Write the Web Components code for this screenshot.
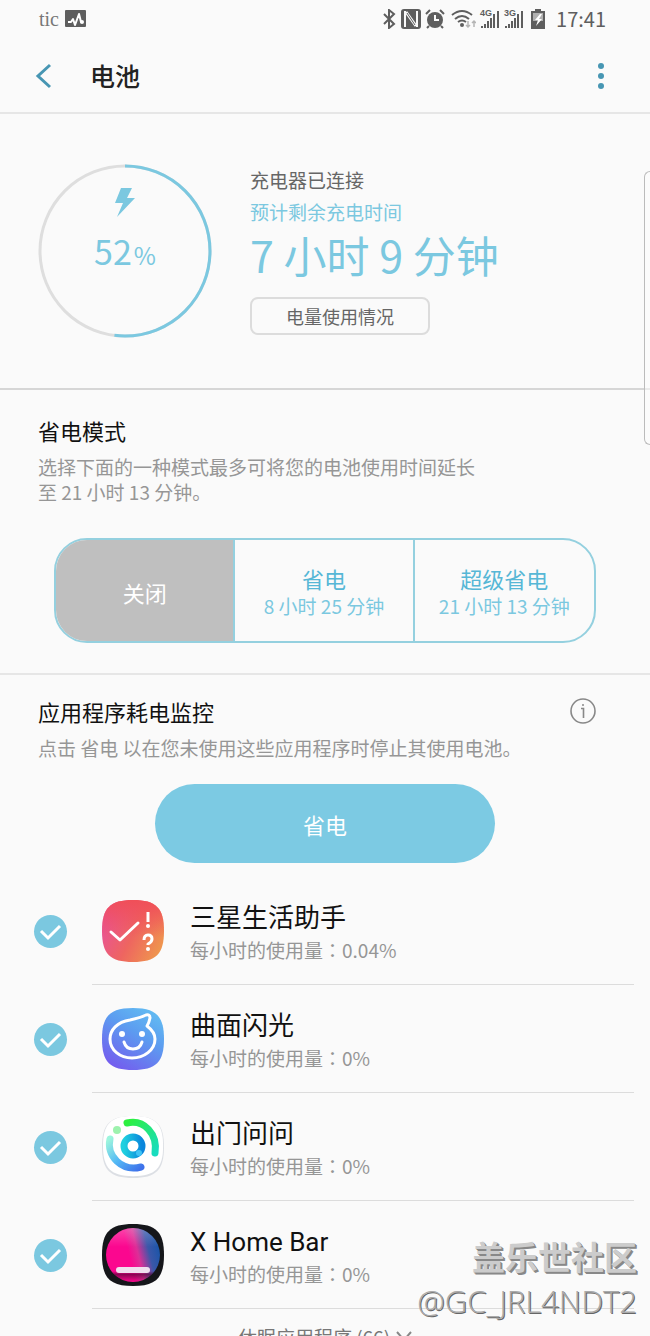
<!DOCTYPE html>
<html lang="zh-CN">
<head>
<meta charset="utf-8">
<meta name="viewport" content="width=device-width, initial-scale=1">
<title>电池</title>
<style>
  html, body {
    height: 100%;
    margin: 0;
  }
  body {
    background: #fafafa;
    color: #111;
    font-family: "Noto Sans CJK SC", "Liberation Sans", sans-serif;
    font-weight: 400;
    overflow: hidden;
    --accent: #7bc8e0;
    --accent-deep: #56b7d6;
    --muted: #969696;
    --dark: #666;
  }
</style>
</head>
<body>
<phone-screen>
  <status-bar slot="top" time="17:41"></status-bar>
  <title-bar slot="top">电池</title-bar>

  <battery-summary level="52">
    <span slot="state">充电器已连接</span>
    <span slot="hint">预计剩余充电时间</span>
    <span slot="time">7 小时 9 分钟</span>
    <span slot="action">电量使用情况</span>
  </battery-summary>

  <settings-section>
    <span slot="title">省电模式</span>
    <span slot="text">选择下面的一种模式最多可将您的电池使用时间延长至 21 小时 13 分钟。</span>
    <mode-switch>
      <mode-option selected>关闭</mode-option>
      <mode-option detail="8 小时 25 分钟">省电</mode-option>
      <mode-option detail="21 小时 13 分钟">超级省电</mode-option>
    </mode-switch>
  </settings-section>

  <settings-section info>
    <span slot="title">应用程序耗电监控</span>
    <span slot="text">点击 省电 以在您未使用这些应用程序时停止其使用电池。</span>
    <pill-button>省电</pill-button>
  </settings-section>

  <app-list></app-list>
  <sleep-more>休眠应用程序 (66)</sleep-more>

  <edge-handle slot="over"></edge-handle>
  <water-mark slot="over" user="@GC_JRL4NDT2">盖乐世社区</water-mark>
</phone-screen>

<script>
class BaseElement extends HTMLElement {

  constructor() {
    super();
    this.attachShadow({mode: 'open'});
  }

  connectedCallback() {
    this.shadowRoot.innerHTML = this.render();
  }
}

class PhoneScreen extends BaseElement {
  render() {
    return `
      <style>
        :host { display: flex; flex-direction: column; position: relative; height: 100%; overflow: hidden; }
        main { flex: 1; min-height: 0; overflow-y: auto; scrollbar-width: none; }
      </style>
      <slot name="top"></slot>
      <main><slot></slot></main>
      <slot name="over"></slot>
    `;
  }
}

class StatusBar extends BaseElement {
  // signal triangle made of bars, with the network name over it
  signal(name) {
    return `
      <span class="signal">
        <small>${name}</small>
        <svg width="20" height="20" viewBox="0 0 20 20" fill="#5e5e5e">
          <rect x="1" y="17" width="2" height="2"/><rect x="4" y="15" width="2" height="4"/>
          <rect x="7" y="12" width="2" height="7"/><rect x="10" y="9" width="2" height="10"/>
          <rect x="13" y="5" width="2" height="14"/><rect x="17" y="2" width="2" height="17"/>
        </svg>
      </span>`;
  }

  render() {
    return `
      <style>
        :host { display: flex; align-items: center; justify-content: space-between; height: 38px; padding: 0 44px 0 39px; color: #5e5e5e; }
        div { display: flex; align-items: center; gap: 4px; }
        .left { gap: 6px; }
        .left span { font: 20px/24px "Liberation Serif", serif; color: #777; }
        .time { font-size: 20px; line-height: 24px; margin-left: 4px; }
        .signal { position: relative; display: flex; }
        small { position: absolute; left: 0; top: 0; font: bold 9px/9px "Liberation Sans", sans-serif; background: #fafafa; }
        svg { display: block; }
      </style>
      <div class="left">
        <span>tic</span>
        <svg width="21" height="18" viewBox="0 0 21 18">
          <rect width="21" height="17" rx="1" fill="#5e5e5e"/>
          <path d="M3 12h3l2-3 2 6 4-11 2 8h2" fill="none" stroke="#fff" stroke-width="2" stroke-linejoin="round"/>
          <circle cx="17" cy="12" r="2" fill="#fff"/>
        </svg>
      </div>
      <div>
        <svg width="15" height="20" viewBox="0 0 15 20" fill="none" stroke="#5e5e5e" stroke-width="2">
          <path d="M2 5l10 10-5 4V1l5 4L2 15"/>
        </svg>
        <svg width="20" height="20" viewBox="0 0 20 20">
          <rect width="20" height="20" rx="3" fill="#5e5e5e"/>
          <path d="M4 18V2M16 18V2" stroke="#fafafa" stroke-width="2"/>
          <path d="M5 3l10 14" stroke="#fafafa" stroke-width="3"/>
          <path d="M6 4l8 12" stroke="#5e5e5e" stroke-width="1"/>
        </svg>
        <svg width="20" height="20" viewBox="0 0 20 20">
          <circle cx="10" cy="11" r="8" fill="#5e5e5e"/>
          <path d="M1 5l4-4M19 5l-4-4M4 17l-2 2M16 17l2 2" stroke="#5e5e5e" stroke-width="2"/>
          <path d="M10 6v5h4" fill="none" stroke="#fafafa" stroke-width="2"/>
        </svg>
        <svg width="27" height="20" viewBox="0 0 27 20">
          <g fill="none" stroke="#5e5e5e" stroke-width="2" transform="translate(2 0)">
            <path d="M1 6q10-8 20 0M4 10q7-6 14 0M7 13q4-3 8 0"/>
          </g>
          <circle cx="13" cy="16" r="2" fill="#5e5e5e"/>
          <path d="M19 12v6M17 16l2 2 2-2M25 18v-6M23 14l2-2 2 2" fill="none" stroke="#b5b5b5" stroke-width="1.5"/>
        </svg>
        ${this.signal('4G')}
        ${this.signal('3G')}
        <svg width="20" height="20" viewBox="0 0 20 20">
          <path d="M7 0h6v2h4v18H3V2h4z" fill="#5e5e5e"/>
          <rect x="5" y="4" width="10" height="8" fill="#b0b0b0"/>
          <path d="M12 5l-5 6h3l-2 6 6-7h-3l3-5z" fill="#fff"/>
        </svg>
        <span class="time">${this.getAttribute('time')}</span>
      </div>
    `;
  }
}

class TitleBar extends BaseElement {
  render() {
    return `
      <style>
        :host { display: flex; align-items: center; height: 74px; padding: 0 37px 0 31px; border-bottom: 2px solid #e6e6e6; }
        button { display: flex; justify-content: center; width: 24px; padding: 2px 0 0; border: 0; background: none; }
        h1 { flex: 1; margin: 0 0 0 35px; font-size: 25px; line-height: 36px; font-weight: 500; color: #222; }
      </style>
      <button aria-label="返回">
        <svg width="18" height="26" viewBox="0 0 18 26" fill="none" stroke="#4796b3" stroke-width="3">
          <path d="M16 2L4 13l12 11"/>
        </svg>
      </button>
      <h1><slot></slot></h1>
      <button aria-label="更多">
        <svg width="8" height="26" viewBox="0 0 8 26" fill="#4796b3">
          <circle cx="4" cy="3" r="3"/><circle cx="4" cy="13" r="3"/><circle cx="4" cy="23" r="3"/>
        </svg>
      </button>
    `;
  }
}

class BatterySummary extends BaseElement {
  render() {
    const level = this.getAttribute('level');
    // the arc starts at 12 o'clock
    return `
      <style>
        :host { display: flex; gap: 38px; padding: 50px 38px; border-bottom: 2px solid #d6d6d6; }
        .ring { display: grid; flex: none; width: 174px; height: 174px; }
        .ring > * { grid-area: 1 / 1; }
        .level { display: flex; flex-direction: column; align-items: center; padding-top: 24px; color: var(--accent); }
        .level p { margin: 12px 0 0; font-size: 34px; line-height: 44px; }
        .level small { font-size: 24px; margin-left: 2px; }
        .info { display: flex; flex-direction: column; align-items: flex-start; color: var(--dark); font-size: 19px; line-height: 32px; }
        .hint { color: var(--accent); }
        .time { color: var(--accent); font-size: 43px; line-height: 52px; }
        button { margin-top: 17px; width: 180px; height: 38px; padding: 0; border: 2px solid #dcdcdc; border-radius: 8px;
          background: none; color: var(--dark); font: inherit; font-size: 18px; line-height: 32px; }
      </style>
      <div class="ring">
        <svg width="174" height="174" viewBox="0 0 174 174" fill="none" stroke-width="3">
          <circle cx="87" cy="87" r="85" stroke="#dedede"/>
          <circle cx="87" cy="87" r="85" stroke="var(--accent)" pathLength="100"
            stroke-dasharray="${level} 100" transform="rotate(-90 87 87)"/>
        </svg>
        <div class="level">
          <svg width="20" height="29" viewBox="0 0 20 29" fill="var(--accent)">
            <path d="M6 0h11l-5 10h8L2 29l6-14H0z"/>
          </svg>
          <p>${level}<small>%</small></p>
        </div>
      </div>
      <div class="info">
        <slot name="state"></slot>
        <div class="hint"><slot name="hint"></slot></div>
        <div class="time"><slot name="time"></slot></div>
        <button><slot name="action"></slot></button>
      </div>
    `;
  }
}

class SettingsSection extends BaseElement {
  render() {
    const info = this.hasAttribute('info') ? `
      <button aria-label="信息">
        <svg width="26" height="26" viewBox="0 0 26 26" fill="none" stroke="#888">
          <circle cx="13" cy="13" r="12" stroke-width="1.6"/>
          <path d="M11 10.5h2.5V20" stroke-width="1.6"/>
          <circle cx="13" cy="7" r="1" fill="#888" stroke="none"/>
        </svg>
      </button>` : '';
    return `
      <style>
        :host { display: block; padding: 26px 54px 30px 38px; border-bottom: 2px solid #e6e6e6; }
        :host([info]) { padding: 22px 54px 14px 38px; border: 0; }
        header { display: flex; align-items: center; justify-content: space-between; height: 28px; }
        h2 { margin: 0; font-size: 22px; line-height: 28px; font-weight: 400; }
        button { display: flex; padding: 0; border: 0; background: none; }
        p { max-width: 450px; margin: 10px 0 0; color: var(--muted); font-size: 19px; line-height: 25px; }
        :host([info]) p { max-width: none; }
      </style>
      <header><h2><slot name="title"></slot></h2>${info}</header>
      <p><slot name="text"></slot></p>
      <slot></slot>
    `;
  }
}

class ModeSwitch extends BaseElement {
  render() {
    return `
      <style>
        :host { display: grid; grid-template-columns: repeat(3, 1fr); height: 101px; margin: 34px 0 0 16px;
          border: 2px solid #94d0df; border-radius: 33px; overflow: hidden; }
      </style>
      <slot></slot>
    `;
  }
}

class ModeOption extends BaseElement {
  render() {
    const detail = this.getAttribute('detail');
    const selected = this.hasAttribute('selected');
    return `
      <style>
        :host { display: flex; border-right: 2px solid #94d0df; }
        :host(:last-child) { border-right: 0; }
        button { flex: 1; padding: 2px 0 0; border: 0; background: none; font: inherit; font-size: 22px; line-height: 28px;
          color: var(--accent-deep); }
        :host([selected]) button { background: #bfbfbf; color: #fff; }
        small { display: block; color: var(--accent); font-size: 19px; line-height: 28px; }
      </style>
      <button aria-pressed="${selected}"><slot></slot>${detail ? `<small>${detail}</small>` : ''}</button>
    `;
  }
}

class PillButton extends BaseElement {
  render() {
    return `
      <style>
        :host { display: flex; justify-content: center; margin: 24px 0 0 16px; }
        button { width: 340px; height: 79px; padding: 0; border: 0; border-radius: 40px; background: #7ccae3; color: #fff;
          font: inherit; font-size: 22px; line-height: 28px; }
      </style>
      <button><slot></slot></button>
    `;
  }
}

// 62 x 62 launcher icons
const tile = 'M31 0C54 0 62 8 62 31S54 62 31 62 0 54 0 31 8 0 31 0z';

const apps = [
  {
    name: '三星生活助手',
    usage: '0.04%',
    icon: `
      <linearGradient id="g" x1="0" y1=".3" x2="1" y2=".8">
        <stop offset="0" stop-color="#e8529c"/><stop offset=".5" stop-color="#ee6560"/><stop offset="1" stop-color="#ef9a4c"/>
      </linearGradient>
      <linearGradient id="t" x1="0" y1="0" x2="0" y2="1">
        <stop offset="0" stop-color="#f04f58"/><stop offset=".6" stop-color="#f04f58" stop-opacity="0"/>
      </linearGradient>
      <path d="${tile}" fill="url(#g)"/><path d="${tile}" fill="url(#t)"/>
      <g fill="none" stroke="#fff" stroke-width="3" stroke-linecap="round" stroke-linejoin="round">
        <path d="M9 32l9 8 18-17"/>
        <path d="M46 12v10" stroke-width="3" stroke-linecap="butt"/>
        <path d="M42 40q0-5 4-5t4 4q0 3-4 5v1" stroke-linecap="butt"/>
      </g>
      <circle cx="46" cy="26" r="2" fill="#fff"/><circle cx="46" cy="49" r="2" fill="#fff"/>`
  },
  {
    name: '曲面闪光',
    usage: '0%',
    icon: `
      <linearGradient id="g" x1=".2" y1="1" x2=".8" y2="0">
        <stop offset="0" stop-color="#7559ee"/><stop offset=".6" stop-color="#5c9cf0"/><stop offset="1" stop-color="#62bdf2"/>
      </linearGradient>
      <path d="${tile}" fill="url(#g)"/>
      <g fill="none" stroke="#fff" stroke-width="3" stroke-linecap="round" stroke-linejoin="round">
        <path d="M45 18q2-3 3-8 0-4-4-3-6 3-16 5C15 14 8 22 8 31c0 11 10 19 22 19s23-8 23-19q0-7-8-13z"/>
        <path d="M22 34q2 7 9 7t9-7"/>
      </g>
      <circle cx="20" cy="26" r="3" fill="#fff"/><circle cx="40" cy="26" r="3" fill="#fff"/>`
  },
  {
    name: '出门问问',
    usage: '0%',
    icon: `
      <linearGradient id="g" x1="0" y1="0" x2="1" y2="1">
        <stop offset="0" stop-color="#2df03f"/><stop offset="1" stop-color="#18dcc0"/>
      </linearGradient>
      <linearGradient id="b" x1="0" y1="0" x2="1" y2="1">
        <stop offset="0" stop-color="#9df5dd"/><stop offset=".5" stop-color="#53b9f5"/><stop offset="1" stop-color="#3e72ea"/>
      </linearGradient>
      <linearGradient id="c" x1="0" y1="0" x2="1" y2="0">
        <stop offset="0" stop-color="#1fd0df"/><stop offset="1" stop-color="#0a86dc"/>
      </linearGradient>
      <path d="${tile}" fill="#dcdfe4"/>
      <path d="${tile}" fill="#fff" transform="translate(1 0) scale(.97)"/>
      <g fill="none" stroke-width="7" stroke-linecap="round">
        <path d="M25 7C42 3 56 18 53 37" stroke="url(#g)"/>
        <path d="M8 23C4 40 20 56 39 51" stroke="url(#b)"/>
      </g>
      <circle cx="15" cy="14" r="4" fill="#9df2ae"/>
      <circle cx="31" cy="30" r="9" fill="none" stroke="url(#c)" stroke-width="7"/>
      <circle cx="37" cy="37" r="3" fill="#3fc4f4"/>`
  },
  {
    name: 'X Home Bar',
    usage: '0%',
    icon: `
      <linearGradient id="g" x1=".2" y1=".6" x2="1" y2=".4">
        <stop offset=".3" stop-color="#fb078f"/><stop offset=".5" stop-color="#dc2f97"/>
        <stop offset=".75" stop-color="#3b57a9"/><stop offset="1" stop-color="#1a55a8"/>
      </linearGradient>
      <linearGradient id="s" x1="0" y1="0" x2="0" y2="1">
        <stop offset="0" stop-color="#fff" stop-opacity=".25"/><stop offset=".35" stop-color="#fff" stop-opacity="0"/>
        <stop offset=".8" stop-color="#40002a" stop-opacity="0"/><stop offset=".86" stop-color="#40002a" stop-opacity=".6"/>
        <stop offset="1" stop-color="#40002a" stop-opacity="0"/>
      </linearGradient>
      <path d="${tile}" fill="#15161a"/>
      <circle cx="31" cy="31" r="27" fill="url(#g)"/><circle cx="31" cy="31" r="27" fill="url(#s)"/>
      <rect x="14" y="43" width="34" height="6" rx="3" fill="#f0dfee"/>`
  }
];

class AppRow extends BaseElement {
  render() {
    const {name, usage, icon} = this.app;
    return `
      <style>
        :host { display: block; }
        label { display: grid; grid-template-columns: 58px 1fr; padding: 0 16px 0 34px; }
        .check { display: grid; align-items: center; width: 33px; }
        .check > * { grid-area: 1 / 1; }
        input { appearance: none; width: 33px; height: 33px; margin: 0; border: 2px solid #bbb; border-radius: 50%; }
        input:checked { border: 0; background: var(--accent); }
        .check svg { pointer-events: none; }
        input:not(:checked) + svg { visibility: hidden; }
        .row { display: flex; align-items: center; gap: 26px; height: 107px; padding-left: 10px; border-bottom: 1px solid #dcdcdc; }
        .text { padding-top: 4px; }
        .name { font-family: Roboto, "Noto Sans CJK SC", sans-serif; font-size: 26px; line-height: 32px; }
        .usage { margin-top: 2px; font-size: 19px; line-height: 28px; color: var(--muted); }
        /* centred colon */
        .colon { font-family: "Noto Sans CJK TC", sans-serif; }
      </style>
      <label>
        <span class="check">
          <input type="checkbox" checked>
          <svg width="33" height="33" viewBox="0 0 33 33" fill="none" stroke="#fff" stroke-width="3">
            <path d="M7 16l7 7 12-12"/>
          </svg>
        </span>
        <div class="row">
          <svg width="62" height="62" viewBox="0 0 62 62">${icon}</svg>
          <div class="text">
            <div class="name">${name}</div>
            <div class="usage">每小时的使用量<span class="colon" lang="zh-TW">：</span>${usage}</div>
          </div>
        </div>
      </label>
    `;
  }
}

class AppList extends BaseElement {
  render() {
    return '<style>:host { display: block; }</style>';
  }

  connectedCallback() {
    super.connectedCallback();
    for (const app of apps) {
      const row = document.createElement('app-row');
      row.app = app;
      this.shadowRoot.appendChild(row);
    }
  }
}

class SleepMore extends BaseElement {
  render() {
    return `
      <style>
        :host { display: flex; justify-content: center; padding: 14px 0; }
        button { display: flex; align-items: center; gap: 6px; padding: 0; border: 0; background: none; color: #777;
          font: inherit; font-size: 19px; line-height: 28px; }
      </style>
      <button>
        <slot></slot>
        <svg width="16" height="18" viewBox="0 0 16 18" fill="none" stroke="#888" stroke-width="2"><path d="M1 4l7 8 7-8"/></svg>
      </button>
    `;
  }
}

class EdgeHandle extends BaseElement {
  render() {
    return `
      <style>
        :host { position: absolute; right: 0; top: 171px; width: 5px; height: 272px; border: 1px solid #bbb; border-right: 0;
          border-radius: 8px 0 0 8px; background: #fcfcfc88; }
      </style>
    `;
  }
}

class WaterMark extends BaseElement {
  render() {
    return `
      <style>
        :host { position: absolute; right: 13px; bottom: 15px; text-align: right; color: #ccc; pointer-events: none; }
        b { display: block; margin-bottom: 4px; font-size: 33px; line-height: 42px; font-weight: 700; text-shadow: 1px 1px 0 #888, 2px 2px 0 #888; }
        span { display: block; font: 300 31px/40px "Open Sans", "Noto Sans", sans-serif; color: #aaa; text-shadow: 1px 1px 0 #666; }
      </style>
      <b><slot></slot></b>
      <span>${this.getAttribute('user')}</span>
    `;
  }
}

customElements.define('phone-screen', PhoneScreen);
customElements.define('status-bar', StatusBar);
customElements.define('title-bar', TitleBar);
customElements.define('battery-summary', BatterySummary);
customElements.define('settings-section', SettingsSection);
customElements.define('mode-switch', ModeSwitch);
customElements.define('mode-option', ModeOption);
customElements.define('pill-button', PillButton);
customElements.define('app-row', AppRow);
customElements.define('app-list', AppList);
customElements.define('sleep-more', SleepMore);
customElements.define('edge-handle', EdgeHandle);
customElements.define('water-mark', WaterMark);
</script>
</body>
</html>
